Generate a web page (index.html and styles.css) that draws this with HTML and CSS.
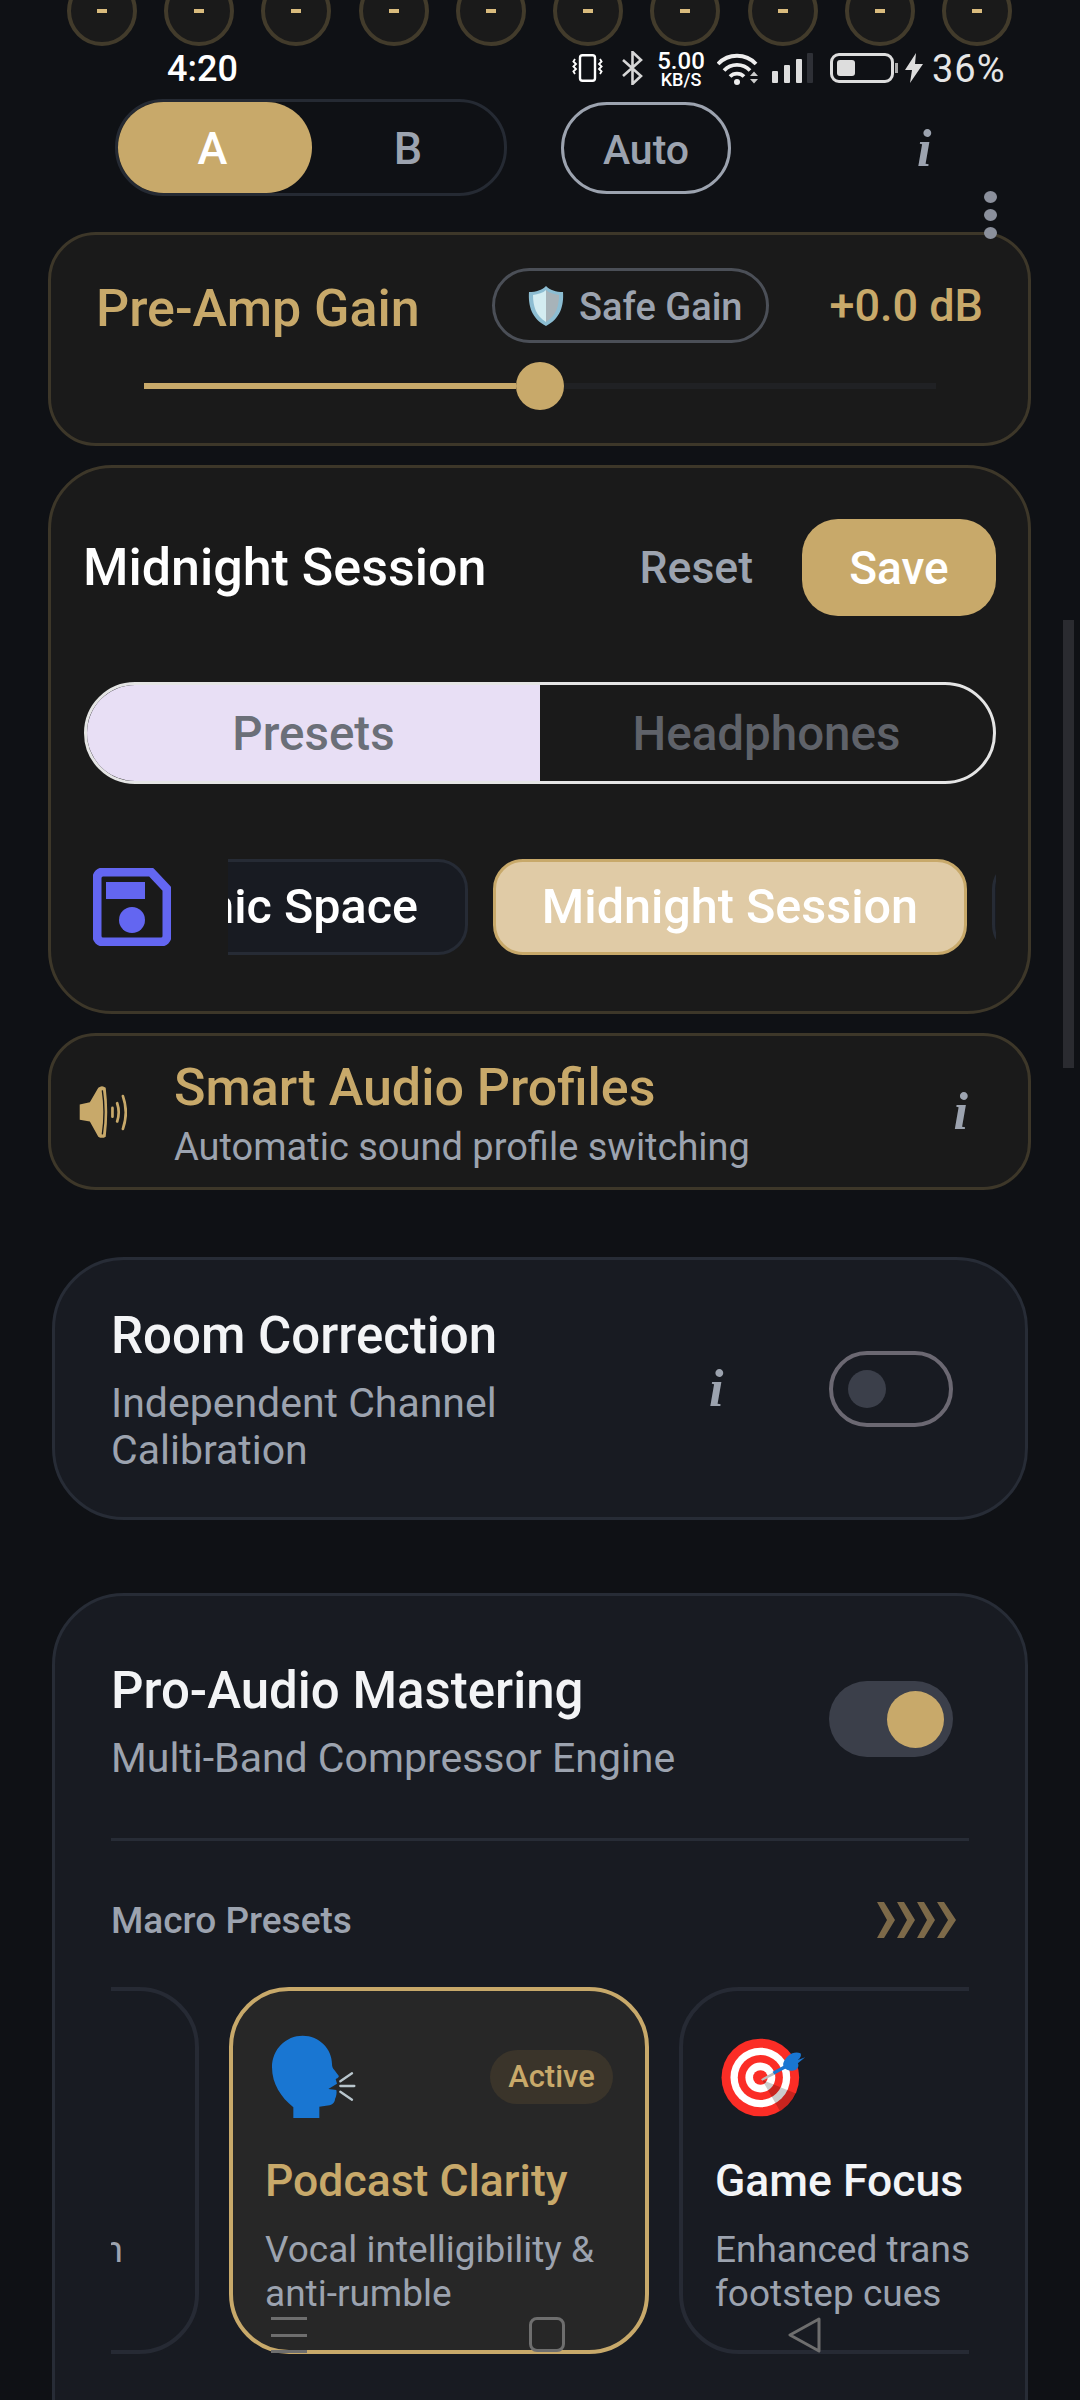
FILE: index.html
```html
<!DOCTYPE html>
<html>
	<head>
		<meta charset="UTF-8">
		<title>Equalizer</title>
		<link rel="stylesheet" href="styles.css">
	</head>
	<body>
		<div class="knobs">
			<div class="knob"><i></i></div><div class="knob"><i></i></div><div class="knob"><i></i></div><div class="knob"><i></i></div><div class="knob"><i></i></div>
			<div class="knob"><i></i></div><div class="knob"><i></i></div><div class="knob"><i></i></div><div class="knob"><i></i></div><div class="knob"><i></i></div>
		</div>

		<div class="status">
			<span class="time">4:20</span>
			<div class="status-icons">
				<svg class="st-vib" viewBox="0 0 31 28"><rect x="8" y="1.2" width="15" height="25.6" rx="2.5" fill="none" stroke="#fff" stroke-width="2.4"/><path d="M3 5l-1.6 2.5L4 10 1.4 12.5 4 15l-2.6 2.5L3 20M28 5l1.6 2.5L27 10l2.6 2.5L27 15l2.6 2.5L28 20" fill="none" stroke="#fff" stroke-width="1.8"/></svg>
				<svg class="st-bt" viewBox="0 0 21 34"><path d="M1 9l18 16-8.500 8V1l8.500 8L1 25" fill="none" stroke="#d6d6d6" stroke-width="2.600"/></svg>
				<div class="st-speed"><b>5.00</b><span>KB/S</span></div>
				<svg class="st-wifi" viewBox="0 0 43 32"><path d="M1 11a26 26 0 0 1 38 0M7 17.500a18 18 0 0 1 26 0M13 23.500a10 10 0 0 1 14 0" fill="none" stroke="#eee" stroke-width="3.800"/><circle cx="20" cy="29" r="3" fill="#eee"/><path d="M33 23l4-4.500 4 4.500zM33 26h8l-4 4.500z" fill="#ccc"/></svg>
				<svg class="st-sig" viewBox="0 0 41 30"><rect x="0" y="18" width="6" height="12" rx="1" fill="#ddd"/><rect x="12" y="12" width="6" height="18" rx="1" fill="#ddd"/><rect x="24" y="6" width="6" height="24" rx="1" fill="#ddd"/><rect x="35" y="0" width="6" height="30" rx="1" fill="#2e3036"/></svg>
				<div class="st-batt"><div class="st-batt-fill"></div></div>
				<svg class="st-bolt" viewBox="0 0 18 30"><path d="M11 0L0 17h7l-2 13L18 11h-8z" fill="#ddd"/></svg>
				<span class="st-pct">36%</span>
			</div>
		</div>

		<div class="page">
			<div class="ab-row">
				<div class="ab">
					<div class="ab-on">A</div>
					<div class="ab-off">B</div>
				</div>
				<div class="auto">Auto</div>
				<span class="info info-top">i</span>
			</div>

			<div class="dots"><i></i><i></i><i></i></div>

			<div class="card gain">
				<div class="gain-head">
					<span class="gain-title">Pre-Amp Gain</span>
					<div class="safe">
						<svg class="safe-icon" viewBox="0 0 38 42"><path d="M19 1c4 4 10 6 17 6 1 14-3 27-17 34C5 34 1 21 2 7c7 0 13-2 17-6z" fill="#8cbdd2"/><path d="M19 5c-3 3-8 4-13 5 0 11 3 21 13 27z" fill="#d3ecf1"/><path d="M19 5c3 3 8 4 13 5 0 11-3 21-13 27z" fill="#a7b3b9"/></svg>
						<span>Safe Gain</span>
					</div>
					<span class="gain-val">+0.0 dB</span>
				</div>
				<div class="slider">
					<div class="slider-fill"></div>
					<div class="slider-thumb"></div>
					<div class="slider-rest"></div>
				</div>
			</div>

			<div class="card session">
				<div class="session-head">
					<span class="session-title">Midnight Session</span>
					<span class="reset">Reset</span>
					<div class="save">Save</div>
				</div>
				<div class="tabs">
					<div class="tab tab-on">Presets</div>
					<div class="tab">Headphones</div>
				</div>
				<div class="chip-row">
					<svg class="floppy" viewBox="0 0 78 78"><path d="M10 4h48l16 17v47a6 6 0 0 1-6 6H10a6 6 0 0 1-6-6V10a6 6 0 0 1 6-6z" fill="none" stroke="#6366f1" stroke-width="9" stroke-linejoin="round"/><rect x="13" y="14" width="39" height="17" fill="#6366f1"/><circle cx="39" cy="52" r="13" fill="#6366f1"/></svg>
					<div class="chips">
						<div class="chip chip-first">Dynamic Space</div>
						<div class="chip chip-on">Midnight Session</div>
						<div class="chip">Late Night</div>
					</div>
				</div>
			</div>

			<div class="card smart">
				<svg class="speaker" viewBox="50 132 145 160"><path d="M55 190l30-7 25-43q11-9 22 0 9 72 0 145-11 7-22 0l-25-45-30-5z" fill="#c8a96a"/><path d="M122 148q10 65 0 130" fill="none" stroke="#1a1a1a" stroke-width="4"/><path d="M152 200v26M166 186q9 27 0 54M183 165q17 48 0 97" fill="none" stroke="#c8a96a" stroke-width="8" stroke-linecap="round"/></svg>
				<div class="smart-text">
					<div class="smart-title">Smart Audio Profiles</div>
					<div class="sub">Automatic sound profile switching</div>
				</div>
				<span class="info info-smart">i</span>
			</div>

			<div class="panel room">
				<div class="panel-text">
					<div class="panel-title">Room Correction</div>
					<div class="sub room-sub">Independent Channel Calibration</div>
				</div>
				<span class="info info-room">i</span>
				<div class="switch switch-off"><i></i></div>
			</div>

			<div class="panel pro">
				<div class="pro-head">
					<div>
						<div class="panel-title">Pro-Audio Mastering</div>
						<div class="sub pro-sub">Multi-Band Compressor Engine</div>
					</div>
					<div class="switch switch-on"><i></i></div>
				</div>
				<div class="macro-head">
					<span class="macro-label">Macro Presets</span>
					<svg class="chev" viewBox="0 0 80 36"><g fill="#7d6a49"><path d="M0 0h7l11 18L7 36H0l10-18z"/><path d="M20 0h7l11 18-11 18h-7l10-18z"/><path d="M40 0h7l11 18-11 18h-7l10-18z"/><path d="M60 0h7l12 18-12 18h-7l11-18z"/></g></svg>
				</div>
				<div class="macros">
					<div class="macro macro-first">
						<div class="macro-top"></div>
						<div class="macro-title">Warm Vinyl</div>
						<div class="macro-sub macro-sub-end">Analog warmth</div>
					</div>
					<div class="macro macro-on">
						<div class="macro-top">
							<svg class="head" viewBox="120 78 255 252"><path d="M187 327V295C150 265 123 225 123 175 123 120 165 80 215 80c50 0 88 40 88 85 0 7 2 13 7 18l13 17c2 5-5 8-9 10l4 14-26 16 24 3c2 9 0 19-4 27 0 13-12 20-27 20l-20 3v34z" fill="#1976d2"/><path d="M328 217l35-24M328 231h42M328 248l35 24" fill="none" stroke="#b9c6cd" stroke-width="7" stroke-linecap="round"/></svg>
							<span class="badge">Active</span>
						</div>
						<div class="macro-title">Podcast Clarity</div>
						<div class="macro-sub">Vocal intelligibility &amp; anti-rumble</div>
					</div>
					<div class="macro">
						<div class="macro-top">
							<svg class="target" viewBox="95 84 255 238"><circle cx="213" cy="203" r="117" fill="#fb2d26"/><circle cx="213" cy="203" r="90" fill="#fff"/><circle cx="213" cy="203" r="68" fill="#fb2d26"/><circle cx="213" cy="203" r="45" fill="#fff"/><circle cx="213" cy="203" r="22" fill="#fb2d26"/><path d="M218 210L322 252A117 117 0 0 1 272 304z" fill="#000" opacity=".2"/><path d="M215 208l40-22 4 7-40 20z" fill="#bdbdbd"/><path d="M250 186l40-22 5 9-40 21z" fill="#1976d2"/><path d="M282 160c8-22 30-38 52-30 4 8-2 16-8 20l22-8-22 18c6 10-4 26-24 22-12-2-22-10-20-22z" fill="#1976d2"/></svg>
						</div>
						<div class="macro-title">Game Focus</div>
						<div class="macro-sub">Enhanced transients footstep cues</div>
					</div>
				</div>
			</div>
		</div>

		<div class="scrollbar"></div>

		<div class="nav">
			<div class="nav-menu"><i></i><i></i><i></i></div>
			<div class="nav-home"></div>
			<svg class="nav-back" viewBox="0 0 35 36"><path d="M32 2L3 18l29 16z" fill="none" stroke="#6e6e6e" stroke-width="3" stroke-linejoin="round"/></svg>
		</div>
	</body>
</html>
```

FILE: styles.css
```css
*{padding: 0;margin: 0;box-sizing: border-box;}
html,body{width: 1080px;height: 2400px;overflow: hidden;}
body{background: #0f1115;font-family: Roboto, "Noto Sans", sans-serif;position: relative;color: #f3f4f6;}
i{font-style: normal;display: block;}

/* knobs cut off at the top */
.knobs{display: flex;justify-content: space-between;padding: 0 68px 0 67px;margin-top: -24px;}
.knob{width: 70px;height: 70px;border-radius: 50%;background: #1a1a1a;border: 4px solid #423b2b;display: flex;align-items: center;justify-content: center;}
.knob i{width: 10px;height: 4px;background: #d9bb7d;}

/* status bar */
.status{position: absolute;top: 0;left: 0;width: 1080px;height: 100px;display: flex;color: #fff;}
.time{position: absolute;left: 167px;top: 48px;font-size: 36px;line-height: 42px;font-weight: 500;}
.status-icons{position: absolute;left: 572px;top: 51px;height: 36px;display: flex;align-items: flex-start;}
.st-vib{width: 31px;height: 28px;margin-top: 3px;}
.st-bt{width: 21px;height: 34px;margin-left: 19px;}
.st-speed{width: 50px;margin-left: 13px;text-align: center;display: flex;flex-direction: column;align-items: center;}
.st-speed b{font-size: 24px;line-height: 20px;font-weight: 500;}
.st-speed span{font-size: 18px;line-height: 16px;font-weight: 500;margin-top: 1px;}
.st-wifi{width: 43px;height: 32px;margin: 2px 0 0 11px;}
.st-sig{width: 41px;height: 30px;margin: 2px 0 0 12px;}
.st-batt{width: 64px;height: 30px;margin: 2px 0 0 17px;border: 3px solid #ddd;border-radius: 9px;padding: 4px;position: relative;}
.st-batt:after{content: "";position: absolute;right: -7px;top: 7px;width: 3px;height: 10px;background: #aaa;}
.st-batt-fill{width: 18px;height: 16px;background: #ddd;border-radius: 3px;}
.st-bolt{width: 18px;height: 30px;margin: 2px 0 0 11px;}
.st-pct{font-size: 38px;line-height: 36px;margin: 0 0 0 9px;color: #e6e6e6;letter-spacing: 1px;}

.page{padding-left: 48px;width: 1031px;}

/* A/B row */
.ab-row{display: flex;align-items: center;margin: 53px 0 0 67px;height: 97px;}
.ab{width: 392px;height: 97px;border: 3px solid #252a33;border-radius: 48px;display: flex;align-items: center;font-size: 45px;font-weight: 500;}
.ab-on{width: 194px;height: 91px;padding-right: 5px;background: #c8a96a;border-radius: 46px;color: #fff;text-align: center;line-height: 93px;}
.ab-off{flex: 1;text-align: center;color: #9ca3af;padding-top: 2px;}
.auto{width: 170px;height: 92px;margin-left: 54px;border: 3px solid #9ca3af;border-radius: 46px;color: #9ca3af;font-size: 41px;font-weight: 500;text-align: center;line-height: 90px;}
.info{font-family: "Liberation Serif", serif;font-style: italic;font-weight: bold;color: #9ca3af;font-size: 52px;line-height: 52px;}
.info-top{margin-left: 186px;padding-top: 2px;}

.dots{position: absolute;left: 984px;top: 191px;display: flex;flex-direction: column;gap: 6px;z-index: 2;}
.dots i{width: 13px;height: 12px;border-radius: 50%;background: #8b909c;}

/* gold outlined cards */
.card{background: #1a1a1a;border: 3px solid #3d3729;border-radius: 48px;width: 983px;}
.gain{height: 214px;margin-top: 36px;padding: 33px 45px 0 45px;}
.gain-head{display: flex;align-items: center;height: 75px;}
.gain-title{color: #c8a96a;font-size: 52px;font-weight: 500;width: 396px;padding-top: 5px;}
.safe{width: 277px;height: 75px;border: 3px solid #4b4f57;border-radius: 38px;display: flex;align-items: center;padding-left: 32px;gap: 14px;color: #9ca3af;font-size: 38px;font-weight: 500;}
.safe-icon{width: 38px;height: 42px;}
.safe span{padding-top: 2px;}
.gain-val{margin-left: auto;color: #c8a96a;font-size: 45px;font-weight: 500;}
.slider{display: flex;align-items: center;height: 48px;margin: 19px 0 0 48px;width: 792px;}
.slider-fill{width: 372px;height: 6px;background: #c8a96a;}
.slider-thumb{width: 48px;height: 48px;border-radius: 50%;background: #c8a96a;}
.slider-rest{flex: 1;height: 6px;background: #202124;}

.session{height: 549px;margin-top: 19px;border-radius: 64px;padding: 51px 32px 0 33px;}
.session-head{display: flex;align-items: center;height: 97px;}
.session-title{color: #fff;font-size: 52px;font-weight: 500;margin-left: -1px;}
.reset{margin-left: auto;color: #9ca3af;font-size: 44.500px;font-weight: 500;}
.save{width: 194px;height: 97px;margin-left: 49px;background: #c8a96a;border-radius: 36px;color: #fff;font-size: 46px;font-weight: 500;text-align: center;line-height: 99px;}
.tabs{display: flex;height: 102px;margin-top: 66px;border: 3px solid #e5e5e5;border-radius: 51px;overflow: hidden;}
.tab{flex: 1;text-align: center;font-size: 47.500px;font-weight: 500;line-height: 98px;color: #5f6269;}
.tab-on{background: #e8dff5;color: #6b6f78;}
.chip-row{display: flex;align-items: center;height: 96px;margin-top: 75px;}
.floppy{width: 78px;height: 78px;flex: none;margin-left: 9px;}
.chips{flex: 1;min-width: 0;margin-left: 57px;display: flex;gap: 25px;overflow: hidden;}
.chip{flex: none;width: 440px;height: 96px;padding: 0 47px;border: 3px solid #262b35;border-radius: 30px;background: #181b22;color: #fff;font-size: 48.500px;font-weight: 500;line-height: 90px;white-space: nowrap;}
.chip-first{margin-left: -200px;text-align: right;}
.chip-on{width: 474px;background: #e0cba6;border-color: #c8a96a;text-align: center;padding: 0;}

.smart{height: 157px;margin-top: 19px;display: flex;align-items: center;padding: 0 60px 0 27px;}
.speaker{width: 49px;height: 54px;flex: none;}
.smart-text{margin-left: 47px;flex: 1;padding-top: 6px;}
.smart-title{color: #c8a96a;font-size: 52px;font-weight: 500;line-height: 58px;}
.sub{color: #9ca3af;font-size: 41px;}
.smart-text .sub{font-size: 38px;line-height: 46px;margin-top: 7px;}

/* dark blue panels */
.panel{background: #181b22;border: 3px solid #272c36;border-radius: 72px;width: 976px;margin-left: 4px;}
.panel-title{font-size: 51px;font-weight: 500;line-height: 60px;color: #f3f4f6;}
.room{height: 263px;margin-top: 67px;display: flex;align-items: center;padding: 0 72px 0 56px;}
.panel-text{width: 400px;padding-top: 3px;}
.room-sub{line-height: 47px;margin-top: 14px;}
.info-room{margin-left: 198px;}
.switch{width: 124px;height: 76px;border-radius: 38px;flex: none;display: flex;align-items: center;}
.switch-off{margin-left: auto;border: 4px solid #6b6872;padding-left: 15px;}
.switch-off i{width: 38px;height: 38px;border-radius: 50%;background: #3b3f4a;}
.switch-on{background: #3b3f4a;justify-content: flex-end;padding-right: 9px;}
.switch-on i{width: 57px;height: 57px;border-radius: 50%;background: #c8a96a;}

.pro{height: 900px;margin-top: 73px;padding: 0 56px 0 56px;}
.pro-head{display: flex;align-items: flex-start;justify-content: space-between;height: 245px;padding-top: 65px;border-bottom: 3px solid #272c36;}
.pro-head .switch{margin-top: 20px;margin-right: 16px;}
.pro-sub{line-height: 47px;margin-top: 14px;}
.macro-head{display: flex;align-items: center;justify-content: space-between;height: 146px;padding: 12px 12px 0 0;}
.macro-label{color: #9ca3af;font-size: 37px;font-weight: 500;}
.chev{width: 80px;height: 36px;}
.macros{display: flex;gap: 30px;overflow: hidden;}
.macro{flex: none;width: 420px;height: 367px;border: 4px solid #262a34;border-radius: 60px;padding: 44px 24px 0 32px;}
.macro-first{margin-left: -332px;}
.macro-on{background: #272727;border-color: #c8a96a;}
.macro-top{display: flex;align-items: center;justify-content: space-between;height: 84px;}
.head{width: 85px;height: 84px;margin-left: 6px;}
.target{width: 85px;height: 79px;margin-left: 6px;}
.badge{width: 123px;height: 54px;margin-right: 8px;border-radius: 27px;background: #3a342a;color: #c8a96a;font-size: 31px;font-weight: 500;text-align: center;line-height: 54px;}
.macro-title{font-size: 44.500px;font-weight: 500;line-height: 52px;margin-top: 36px;white-space: nowrap;}
.macro-on .macro-title{color: #c8a96a;}
.macro-sub{color: #9ca3af;font-size: 37px;line-height: 44px;margin-top: 21px;}
.macro-sub-end{text-align: right;padding-right: 48px;}

.scrollbar{position: absolute;left: 1063px;top: 620px;width: 11px;height: 448px;background: #2a2b30;}

/* gesture bar over the content */
.nav{position: absolute;top: 2317px;left: 0;width: 1080px;height: 36px;}
.nav-menu{position: absolute;left: 271px;top: 0;width: 36px;height: 36px;display: flex;flex-direction: column;justify-content: space-between;}
.nav-menu i{height: 3px;background: #6e6e6e;}
.nav-home{position: absolute;left: 529px;top: 0;width: 36px;height: 35px;border: 3px solid #6e6e6e;border-radius: 8px;}
.nav-back{position: absolute;left: 787px;top: 0;width: 35px;height: 36px;}
```
